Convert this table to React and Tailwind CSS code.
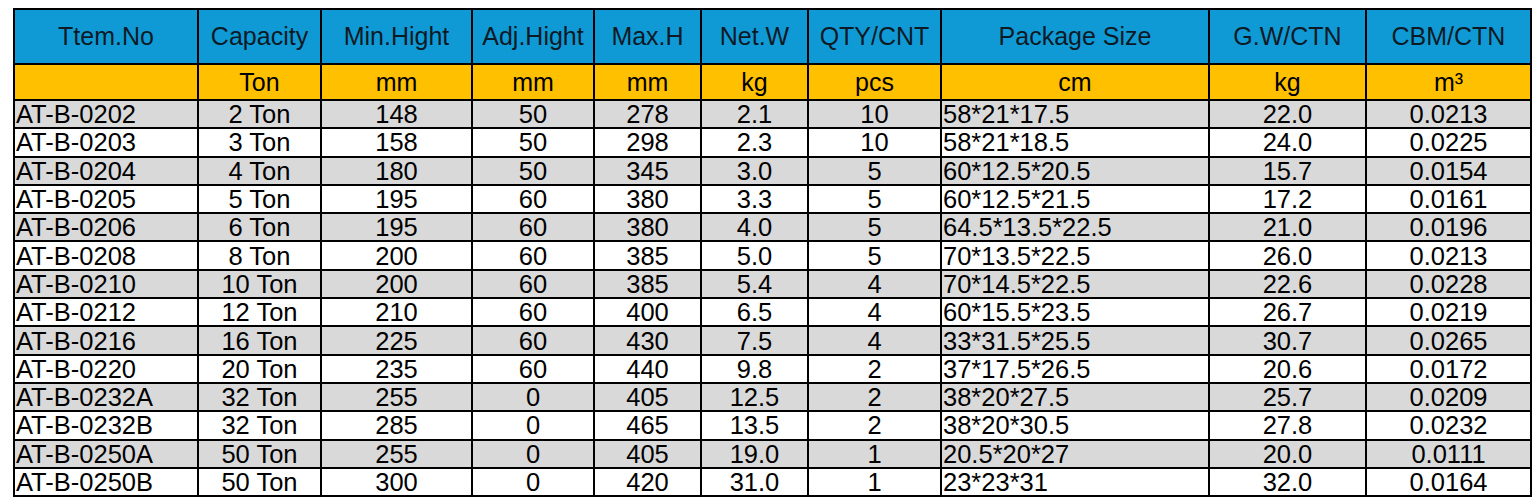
import React from 'react';

// Bottle jack spec sheet (Excel-style table)
const columns = [
  { title: 'Ttem.No', unit: '', width: 184, align: 'left' },
  { title: 'Capacity', unit: 'Ton', width: 123 },
  { title: 'Min.Hight', unit: 'mm', width: 151 },
  { title: 'Adj.Hight', unit: 'mm', width: 122 },
  { title: 'Max.H', unit: 'mm', width: 107 },
  { title: 'Net.W', unit: 'kg', width: 107 },
  { title: 'QTY/CNT', unit: 'pcs', width: 133 },
  { title: 'Package Size', unit: 'cm', width: 268, align: 'left' },
  { title: 'G.W/CTN', unit: 'kg', width: 157 },
  { title: 'CBM/CTN', unit: 'm³', width: 165 },
];

const rows = [
  ['AT-B-0202', '2 Ton', '148', '50', '278', '2.1', '10', '58*21*17.5', '22.0', '0.0213'],
  ['AT-B-0203', '3 Ton', '158', '50', '298', '2.3', '10', '58*21*18.5', '24.0', '0.0225'],
  ['AT-B-0204', '4 Ton', '180', '50', '345', '3.0', '5', '60*12.5*20.5', '15.7', '0.0154'],
  ['AT-B-0205', '5 Ton', '195', '60', '380', '3.3', '5', '60*12.5*21.5', '17.2', '0.0161'],
  ['AT-B-0206', '6 Ton', '195', '60', '380', '4.0', '5', '64.5*13.5*22.5', '21.0', '0.0196'],
  ['AT-B-0208', '8 Ton', '200', '60', '385', '5.0', '5', '70*13.5*22.5', '26.0', '0.0213'],
  ['AT-B-0210', '10 Ton', '200', '60', '385', '5.4', '4', '70*14.5*22.5', '22.6', '0.0228'],
  ['AT-B-0212', '12 Ton', '210', '60', '400', '6.5', '4', '60*15.5*23.5', '26.7', '0.0219'],
  ['AT-B-0216', '16 Ton', '225', '60', '430', '7.5', '4', '33*31.5*25.5', '30.7', '0.0265'],
  ['AT-B-0220', '20 Ton', '235', '60', '440', '9.8', '2', '37*17.5*26.5', '20.6', '0.0172'],
  ['AT-B-0232A', '32 Ton', '255', '0', '405', '12.5', '2', '38*20*27.5', '25.7', '0.0209'],
  ['AT-B-0232B', '32 Ton', '285', '0', '465', '13.5', '2', '38*20*30.5', '27.8', '0.0232'],
  ['AT-B-0250A', '50 Ton', '255', '0', '405', '19.0', '1', '20.5*20*27', '20.0', '0.0111'],
  ['AT-B-0250B', '50 Ton', '300', '0', '420', '31.0', '1', '23*23*31', '32.0', '0.0164'],
];

const App = () => {
  return (
    <div className="w-[1540px] h-[504px] bg-white pt-[8px] pl-[13px] font-['Liberation_Sans',Arial,sans-serif] text-black">
      <table className="table-fixed border-collapse border-2 border-black w-[1517px]">
        <colgroup>
          {columns.map((c) => (
            <col key={c.title} style={{ width: c.width }} />
          ))}
        </colgroup>
        <thead>
          <tr className="h-[55px] bg-[#109ad5]">
            {columns.map((c) => (
              <th key={c.title} className="border-2 border-black font-normal text-[25px] leading-none text-center text-[#0d1a26] p-0">
                {c.title}
              </th>
            ))}
          </tr>
          <tr className="h-[36px] bg-[#ffc000]">
            {columns.map((c) => (
              <th key={c.title} className="border-2 border-black font-normal text-[25px] leading-none text-center p-0">
                {c.unit}
              </th>
            ))}
          </tr>
        </thead>
        <tbody>
          {rows.map((r, i) => (
            <tr key={r[0]} className={i % 2 === 0 ? 'h-[28.3px] bg-[#d9d9d9]' : 'h-[28.3px] bg-white'}>
              {r.map((v, j) => (
                <td
                  key={j}
                  className={
                    columns[j].align === 'left'
                      ? 'border-2 border-black text-[25.5px] leading-[24px] text-left pl-[1px] py-0'
                      : 'border-2 border-black text-[25.5px] leading-[24px] text-center p-0'
                  }
                >
                  {v}
                </td>
              ))}
            </tr>
          ))}
        </tbody>
      </table>
    </div>
  );
};

export default App;
